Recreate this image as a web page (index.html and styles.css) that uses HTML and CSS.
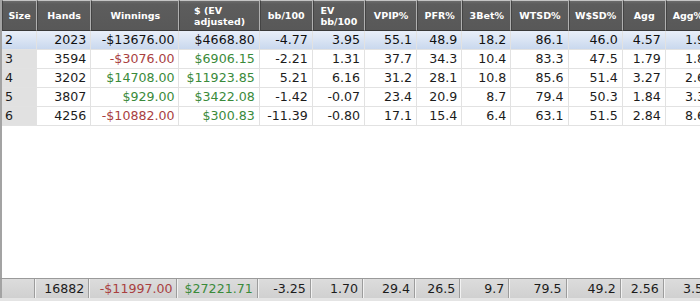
FILE: index.html
```html
<!DOCTYPE html>
<html>
<head>
<meta charset="utf-8">
<link rel="stylesheet" href="styles.css">
</head>
<body>
<div class="panel">
  <div class="main">
    <table class="stats">
      <colgroup>
        <col class="c-size"><col class="c-hands"><col class="c-win"><col class="c-ev">
        <col class="c-bb"><col class="c-evbb"><col class="c-vpip"><col class="c-pfr">
        <col class="c-3bet"><col class="c-wtsd"><col class="c-wsd"><col class="c-agg"><col class="c-aggp">
      </colgroup>
      <thead>
        <tr>
          <th><span>Size</span></th>
          <th><span>Hands</span></th>
          <th><span>Winnings</span></th>
          <th><span>$ (EV<br>adjusted)</span></th>
          <th><span>bb/100</span></th>
          <th><span>EV<br>bb/100</span></th>
          <th><span>VPIP%</span></th>
          <th><span>PFR%</span></th>
          <th><span>3Bet%</span></th>
          <th><span>WTSD%</span></th>
          <th><span>W$SD%</span></th>
          <th><span>Agg</span></th>
          <th><span>Agg%</span></th>
        </tr>
      </thead>
      <tbody>
        <tr class="selected">
          <td class="size">2</td><td>2023</td><td>-$13676.00</td><td>$4668.80</td><td>-4.77</td><td>3.95</td><td>55.1</td><td>48.9</td><td>18.2</td><td>86.1</td><td>46.0</td><td>4.57</td><td>1.9</td>
        </tr>
        <tr>
          <td class="size">3</td><td>3594</td><td class="neg">-$3076.00</td><td class="pos">$6906.15</td><td>-2.21</td><td>1.31</td><td>37.7</td><td>34.3</td><td>10.4</td><td>83.3</td><td>47.5</td><td>1.79</td><td>1.8</td>
        </tr>
        <tr>
          <td class="size">4</td><td>3202</td><td class="pos">$14708.00</td><td class="pos">$11923.85</td><td>5.21</td><td>6.16</td><td>31.2</td><td>28.1</td><td>10.8</td><td>85.6</td><td>51.4</td><td>3.27</td><td>2.6</td>
        </tr>
        <tr>
          <td class="size">5</td><td>3807</td><td class="pos">$929.00</td><td class="pos">$3422.08</td><td>-1.42</td><td>-0.07</td><td>23.4</td><td>20.9</td><td>8.7</td><td>79.4</td><td>50.3</td><td>1.84</td><td>3.3</td>
        </tr>
        <tr>
          <td class="size">6</td><td>4256</td><td class="neg">-$10882.00</td><td class="pos">$300.83</td><td>-11.39</td><td>-0.80</td><td>17.1</td><td>15.4</td><td>6.4</td><td>63.1</td><td>51.5</td><td>2.84</td><td>8.6</td>
        </tr>
      </tbody>
    </table>
  </div>
  <div class="footer">
    <table class="stats totals">
      <colgroup>
        <col class="c-size"><col class="c-hands"><col class="c-win"><col class="c-ev">
        <col class="c-bb"><col class="c-evbb"><col class="c-vpip"><col class="c-pfr">
        <col class="c-3bet"><col class="c-wtsd"><col class="c-wsd"><col class="c-agg"><col class="c-aggp">
      </colgroup>
      <tr>
        <td></td><td>16882</td><td class="neg">-$11997.00</td><td class="pos">$27221.71</td><td>-3.25</td><td>1.70</td><td>29.4</td><td>26.5</td><td>9.7</td><td>79.5</td><td>49.2</td><td>2.56</td><td>3.5</td>
      </tr>
    </table>
  </div>
</div>
</body>
</html>
```
FILE: styles.css
```css
html, body {
  margin: 0;
  padding: 0;
  background: #ffffff;
}

body {
  font-family: "DejaVu Sans", Verdana, sans-serif;
  color: #1c1c1c;
}

.panel {
  width: 700px;
  height: 301px;
  display: flex;
  flex-direction: column;
  overflow: hidden;
  background: #ffffff;
}

.main {
  flex: 1;
  border-left: 2px solid #a3a3a3;
  overflow: hidden;
}

.stats {
  border-collapse: separate;
  border-spacing: 0;
  table-layout: fixed;
  width: 708px;
}

.c-size { width: 35px; }
.c-hands { width: 54px; }
.c-win { width: 88px; }
.c-ev { width: 80px; }
.c-bb { width: 53px; }
.c-evbb { width: 52px; }
.c-vpip { width: 52px; }
.c-pfr { width: 45px; }
.c-3bet { width: 49px; }
.c-wtsd { width: 57px; }
.c-wsd { width: 54px; }
.c-agg { width: 43px; }
.c-aggp { width: 44px; }

.stats th {
  height: 31px;
  padding: 0;
  background: linear-gradient(#6c6c6c 0, #5d5d5d 3px, #585858 100%);
  color: #ffffff;
  font-weight: bold;
  font-size: 9.5px;
  line-height: 11px;
  text-align: center;
  vertical-align: middle;
  border-top: 1px solid #c4c4c4;
  border-left: 1px solid #444444;
  border-right: 1px solid #b0b0b0;
  border-bottom: 1px solid #3a3a3a;
  box-sizing: border-box;
}

.stats th span {
  display: inline-block;
  text-align: left;
}

.stats td {
  height: 19px;
  padding: 0 4px 0 3px;
  box-sizing: border-box;
  font-size: 12.6px;
  line-height: 18px;
  text-align: right;
  white-space: nowrap;
  overflow: hidden;
  border-right: 1px solid #e2e2e2;
  border-bottom: 1px solid #e2e2e2;
}

.stats td.size {
  text-align: left;
  background: #e1e1e1;
  padding-left: 3px;
}

.stats tr.selected td {
  background: linear-gradient(#e9eff9 0%, #dbe5f4 45%, #c9d8ee 100%);
  color: #111111;
}

.neg { color: #a9403f; }
.pos { color: #3a8a3a; }

.footer {
  border-top: 1px solid #9a9a9a;
  border-bottom: 3px solid #e4e4e4;
  background: #d4d4d4;
}

.totals td {
  height: 19px;
  background: linear-gradient(#dcdcdc, #d0d0d0);
  border-left: 1px solid #f2f2f2;
  border-right: 1px solid #9c9c9c;
  border-bottom: 0;
}

.totals td:first-child {
  border-left: 2px solid #a3a3a3;
}
```
